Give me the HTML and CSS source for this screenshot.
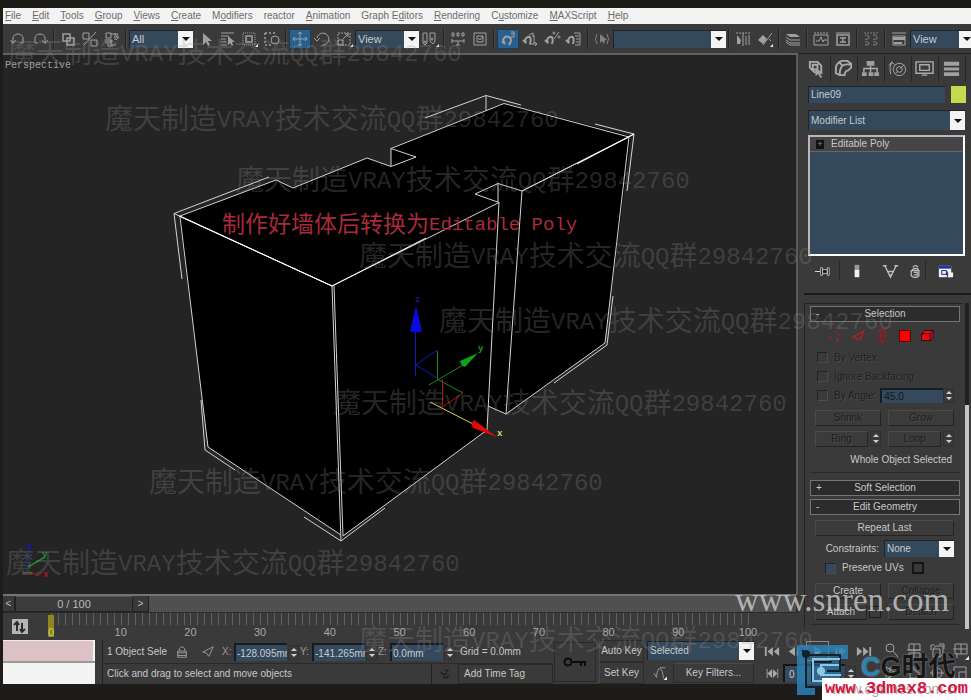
FILE: index.html
```
<!DOCTYPE html>
<html lang="en">
<head>
<meta charset="utf-8">
<title>Perspective</title>
<link rel="stylesheet" href="styles.css">
</head>
<body>
<nav class="menu">
  <button><u>F</u>ile</button><button><u>E</u>dit</button><button><u>T</u>ools</button><button><u>G</u>roup</button><button><u>V</u>iews</button><button><u>C</u>reate</button><button>M<u>o</u>difiers</button><button>reactor</button><button><u>A</u>nimation</button><button>Graph E<u>d</u>itors</button><button><u>R</u>endering</button><button>C<u>u</u>stomize</button><button><u>M</u>AXScript</button><button><u>H</u>elp</button>
</nav>

<div class="toolbar">
  <button class="tool" aria-label="Undo"><svg viewBox="0 0 20 20"><path d="M5 14V9a5 4 0 0 1 10 0v5h-3M2.500 11L5 14.500 8 11"/></svg></button>
  <button class="tool" aria-label="Redo"><svg viewBox="0 0 20 20"><path d="M15 14V9a5 4 0 0 0-10 0v5h3M12 11l3 3.500 3-3.500"/></svg></button>
  <span class="sep"></span>
  <button class="tool" aria-label="Link"><svg viewBox="0 0 20 20"><path stroke-width="1.500" d="M5 5h7v7H5zM9 9h7v7H9z"/></svg></button>
  <button class="tool" aria-label="Unlink"><svg viewBox="0 0 20 20"><path d="M3 4h6v6H3zM11 11h6v6h-6zM16 3L4 16"/></svg></button>
  <button class="tool" aria-label="Bind"><svg viewBox="0 0 20 20"><path d="M4 4h5v5H4zM9 5h7l-2 3h3l-3 3M3 11h7v2H3M9 11v5h5M6 14v3h5M13 4v7"/></svg></button>
  <span class="sep"></span>
  <span class="combo c64"><select aria-label="Selection filter"><option>All</option></select><i></i></span>
  <span class="space"></span>
  <button class="tool" aria-label="Select"><svg viewBox="0 0 20 20"><path class="f" d="M7 4v12l3-3 2 4 2-1-2-4h4z"/></svg></button>
  <button class="tool" aria-label="Select by name"><svg viewBox="0 0 20 20"><path d="M3 4h13M3 7h8M3 10h5M3 13h5M3 16h6"/><path class="f" d="M10 7v9l2-2 2 3 1-1-1-3h3z"/></svg></button>
  <button class="tool" aria-label="Region"><svg viewBox="0 0 20 20"><path stroke-dasharray="1 1" d="M3 4h12v12H3z"/><path stroke-width="1.500" d="M6 7h6v6H6z"/><path class="w" d="M18 15v3h-3z"/></svg></button>
  <button class="tool" aria-label="Crossing"><svg viewBox="0 0 20 20"><path stroke-dasharray="2 2" stroke-width="1.500" d="M3 4h10M3 4v12h8"/><circle cx="13" cy="11" r="4"/></svg></button>
  <span class="sep"></span>
  <button class="tool on" aria-label="Move"><svg viewBox="0 0 20 20"><path d="M10 3v14M3 10h14M8 5l2-2 2 2M8 15l2 2 2-2M5 8l-2 2 2 2M15 8l2 2-2 2"/></svg></button>
  <button class="tool" aria-label="Rotate"><svg viewBox="0 0 20 20"><path d="M5 9a6 6 0 1 1 5 7M2 9l3 3 3-3"/></svg></button>
  <button class="tool" aria-label="Scale"><svg viewBox="0 0 20 20"><path stroke-dasharray="2 1" d="M4 4h12v12H4z"/><path d="M4 11h5v5H4zM9 10l5-5M11 5h3v3"/><path class="w" d="M19 15v3h-3z"/></svg></button>
  <span class="combo c64"><select aria-label="Coordinate system"><option>View</option></select><i></i></span>
  <button class="tool" aria-label="Pivot"><svg viewBox="0 0 20 20"><path d="M3 4h4v10l-2 2-2-2zM10 4h5v8l-2 3-3-3z"/><circle cx="5" cy="13" r="1"/><circle cx="12" cy="10" r="1"/><path class="w" d="M19 15v3h-3z"/></svg></button>
  <span class="sep"></span>
  <button class="tool" aria-label="Manipulate"><svg viewBox="0 0 20 20"><path d="M4 4h2v3H4zM9 4h2v3H9zM14 4h2v3h-2zM4 12h12M4 10v4M16 10v4M10 12v4M8 16h4"/></svg></button>
  <button class="tool" aria-label="Keyboard override"><svg viewBox="0 0 20 20"><path d="M4 4h12v12H4zM7 7h6v6H7zM8 9l2 2 3-4"/></svg></button>
  <span class="sep"></span>
  <button class="tool on" aria-label="Snap"><svg viewBox="0 0 20 20"><path class="b" d="M4 12l3 3M7 15l-2-4q2-5 6-3t0 8M11 16l2-4"/><path d="M13 3h3v5h-3M13 5h3"/></svg></button>
  <button class="tool" aria-label="Angle snap"><svg viewBox="0 0 20 20"><path class="b" d="M3 11l3 3q-2-5 2-6t2 7"/><path d="M9 6l4-2v4M9 15h8M14 6v9M15 13l2 2-2 2"/></svg></button>
  <button class="tool" aria-label="Percent snap"><svg viewBox="0 0 20 20"><path class="b" d="M3 11l3 3q-2-5 2-6t2 7"/><circle cx="12" cy="4" r="1"/><circle cx="17" cy="8" r="1"/><path d="M17 3l-5 7"/></svg></button>
  <button class="tool" aria-label="Spinner snap"><svg viewBox="0 0 20 20"><path class="b" d="M2 11l3 3q-2-5 2-6t2 7"/><path d="M10 4h6v12h-5M11 7h4M12 10h3M12 13h3"/></svg></button>
  <span class="sep"></span>
  <button class="tool dim" aria-label="Named sets"><svg viewBox="0 0 20 20"><path d="M5 5q-3 5 0 10M15 5q3 5 0 10"/><path class="f" d="M8 5v9l2-2 2 3 1-4h2z"/></svg></button>
  <span class="combo c113"><select aria-label="Selection set"><option></option></select><i></i></span>
  <span class="sep"></span>
  <button class="tool" aria-label="Mirror"><svg viewBox="0 0 20 20"><path stroke-dasharray="2 1" d="M3 4h14"/><path class="f" d="M4 6l4 5-1 4H4z"/><path d="M10 4v13M16 6v10M13 7v9"/></svg></button>
  <button class="tool" aria-label="Align"><svg viewBox="0 0 20 20"><path class="f" d="M3 11l5-5 4 4-4 5z"/><path d="M17 4L8 16M14 10l2 2"/><path class="w" d="M18 15v3h-3z"/></svg></button>
  <span class="sep"></span>
  <button class="tool" aria-label="Layers"><svg viewBox="0 0 20 20"><path class="f" d="M3 5h10l4 3H7z"/><path d="M3 8l4 3h10M3 11l4 3h10M3 13l4 3h10"/></svg></button>
  <span class="sep"></span>
  <button class="tool" aria-label="Curve editor"><svg viewBox="0 0 20 20"><path stroke-dasharray="2 1" d="M3 4h14"/><path d="M3 6h14v10H3zM5 12h3l2-4 2 5 1-2h3"/></svg></button>
  <button class="tool" aria-label="Schematic view"><svg viewBox="0 0 20 20"><path d="M3 4h14" /><path stroke-width="1.500" d="M4 6h12v10H4zM7 9h6M7 13h6M10 9v4"/></svg></button>
  <span class="sep"></span>
  <button class="tool dim" aria-label="Materials"><svg viewBox="0 0 20 20"><path stroke-dasharray="2 1" d="M3 4h14"/><path d="M4 6q3-1 4 2t-4 2M12 6q3-1 4 2t-4 2M4 13q3-1 4 1t-4 2M12 13q3-1 4 1t-4 2"/></svg></button>
  <span class="sep"></span>
  <button class="tool" aria-label="Render"><svg viewBox="0 0 20 20"><path d="M3 4h14M4 7h12v9H4z"/><path class="f" d="M4 8h12v3H4zM5 13h8v2H5z"/></svg></button>
  <span class="combo c64"><select aria-label="Render view"><option>View</option></select><i></i></span>
</div>

<main class="main">
  <section class="stage">
    <div class="viewport">
      <svg class="scene" viewBox="3 55 793 539">
        <text x="5" y="68" class="vname">Perspective</text>
        <path fill="#000" d="M179 216L276 180 293 188 367 158 391 166V148L504 103 631 136 605 343 506 414 488 406 487 430 342 536 208 447z"/>
        <g fill="none" stroke="#d4d4d4" stroke-width="1">
          <path d="M180 216L276 180 293 188 367 158 391 166.500 416 157 391 148.500 504 103.500 629 137 522 191 498 183.500 475 194 499 202.500 332 286z"/>
          <path d="M391 148V166M174 213.500L269 177M174 213.500L182 279M174 213.500L332 286M180 217L208 447M201 400L205 450 235 470M208 447L341 535M304 517L341 541M332 286L341 541M334 286L343 536L487 430M341 541L385 508M499 202L487 430M498 183V202M522 191L506 414M488 406L506 414L605 343L629 137M634 134L522 191M634 134L627 191M613 296L607 345 554 383M634 134L595 124M425 118L486 95.500 521 105M486 95.500V111M629 137L634 134"/>
          <path stroke="#fff" d="M179 216L332 286 426 238M577 164L634 134"/>
        </g>
        <g fill="none">
          <path stroke="#1616c8" d="M415.500 376V331M416 365L437 350M416 365L437 378"/>
          <path fill="#0a0ae0" d="M416 306L410 331Q416 334 422 331z"/>
          <path stroke="#128a1c" d="M437.500 351V379M429 385L463 365M437 379L463 393"/>
          <path fill="#10a01c" d="M478 353L460 361Q461 366 465 367z"/>
          <path stroke="#b01414" d="M442.500 379V407L463 393"/>
          <path stroke="#d8d060" d="M430 402L473 424"/>
          <path fill="#e00808" d="M497 437L474 420Q470 424 473 428z"/>
          <path stroke="#1a1aa0" d="M27.500 570L28.500 545"/><path stroke="#178a20" stroke-width="1.500" d="M28 567L45 557"/><path stroke="#a01818" d="M30 572L38 576 42 573"/><path stroke="#777044" d="M23 573H32"/>
        </g>
        <g class="axis"><text x="415" y="302" fill="#15159a">z</text><text x="478" y="351" fill="#1c9c28">y</text><text x="497" y="436" fill="#e0d860">x</text><text x="27" y="549" fill="#1a1aa0">z</text><text x="42" y="557" fill="#1c8c28">y</text><text x="43" y="577" fill="#b01818">x</text></g>
      </svg>
    </div>
    <div class="slider"><button aria-label="Previous frame">&lt;</button><button class="handle">0 / 100</button><button aria-label="Next frame">&gt;</button></div>
    <div class="track">
      <button class="curve" aria-label="Open mini curve editor"><svg viewBox="0 0 16 16"><path fill="#b4b4b4" d="M0 0h16v15H0z"/><path fill="none" stroke="#2c2c2c" stroke-width="2" d="M5 12V4M10 4v8M2 6l3-3 2 3M8 10l2 3 3-3"/></svg></button>
      <div class="ruler">
        <div class="cell"><b class="now">0</b></div><div class="cell"><b>10</b></div><div class="cell"><b>20</b></div><div class="cell"><b>30</b></div><div class="cell"><b>40</b></div><div class="cell"><b>50</b></div><div class="cell"><b>60</b></div><div class="cell"><b>70</b></div><div class="cell"><b>80</b></div><div class="cell"><b>90</b></div><div class="cell last"><b>100</b></div>
      </div>
    </div>
  </section>

  <aside class="panel">
    <div class="tabs">
      <button aria-label="Create"><svg viewBox="0 0 20 20"><path d="M3 3h8l4 4v7H8L3 9zM6 6h5v5H6z"/><path class="f" d="M9 9l8 6-3 1 2 3-2 1-2-4-3 2z"/></svg></button>
      <button aria-label="Modify"><svg viewBox="0 0 20 20"><path d="M2 15V9q1-6 7-7h5l4 3v4l-3 3q-3 0-4 5H6zM9 7q4-2 8-1M9 7q-3 3-3 9M9 7L6 4"/></svg></button>
      <button aria-label="Hierarchy"><svg viewBox="0 0 20 20"><path class="f" d="M6 2h8v5H6zM1 14h5v4H1zM8 14h5v4H8zM14 14h5v4h-5z"/><path stroke-width="1.500" d="M10 7v7M3 14v-4h14v4"/></svg></button>
      <button aria-label="Motion"><svg viewBox="0 0 20 20" class="thin"><circle cx="12" cy="11" r="6.500"/><circle cx="12" cy="11" r="3"/><path d="M3 16q-2-8 1-12M1 7l3-4 3 3M13 10l4-4M8 15l2-2"/></svg></button>
      <button aria-label="Display"><svg viewBox="0 0 20 20"><path d="M1 3h18v12H1zM5 6h10v6H5zM7 17h6" stroke-width="1.500"/></svg></button>
      <button aria-label="Utilities"><svg viewBox="0 0 20 20"><path class="f" d="M2 3h16v4H2zM2 9h16v3H2zM2 14h16v4H2z"/></svg></button>
    </div>
    <div class="name"><input aria-label="Object name" value="Line09"><button class="swatch" aria-label="Object colour"></button></div>
    <span class="combo mod"><select aria-label="Modifier list"><option>Modifier List</option></select><i></i></span>
    <div class="stack"><button><span class="plus">+</span>Editable Poly</button></div>
    <div class="stacktools">
      <button aria-label="Pin stack"><svg viewBox="0 0 20 20"><path d="M1 10h6" stroke="#ddd"/><path class="k" d="M7 6h2v8H7zM9 8h5v4H9zM14 6h2v8h-2z" stroke="#bbb"/></svg></button>
      <button aria-label="Show end result"><svg viewBox="0 0 20 20"><path fill="#999" stroke="none" d="M8 3h5v5H8z"/><path class="w" d="M8 8h5v8H8z"/></svg></button>
      <button aria-label="Make unique"><svg viewBox="0 0 20 20"><path d="M4 4l6 12 6-12M2 4h4M14 4h4M7 10h6M10 16v-3" stroke-width="1.500"/></svg></button>
      <button aria-label="Remove modifier"><svg viewBox="0 0 20 20"><path d="M5 9h9v6q-4 4-9 0zM6 8q4-3 8 0M7 5q3-4 6 0M8 11h4v3H8" stroke-width="1.500"/></svg></button>
      <button aria-label="Configure sets"><svg viewBox="0 0 20 20"><path fill="#eee" stroke="none" d="M3 4h13v12H3z"/><path fill="#2430b0" stroke="none" d="M3 4h13v3H3z"/><path stroke="#1c2478" d="M6 9h5v4H6zM12 10v6M15 13h-5"/><path class="w" d="M13 11h5v5h-5z"/></svg></button>
    </div>
    <div class="rollouts">
      <div class="scroll">
        <div class="rollout">
          <button class="head"><span>-</span>Selection</button>
          <div class="sub">
            <button aria-label="Vertex"><svg viewBox="0 0 20 20"><path fill="#b01c1c" d="M3 11h2v2H3zM9 4h2v2H9zM11 14h3v3h-3zM13 8h2v2h-2z"/></svg></button>
            <button aria-label="Edge"><svg viewBox="0 0 20 20"><path fill="none" stroke="#b82020" stroke-width="1.500" d="M3 12l13-7-4 10z"/></svg></button>
            <button aria-label="Border"><svg viewBox="0 0 20 20"><path fill="none" stroke="#a81818" stroke-width="1.500" d="M7 5l4-3 4 4v8l-4 4-4-3 3-3V7z"/></svg></button>
            <button aria-label="Polygon"><svg viewBox="0 0 20 20"><path fill="#f00" stroke="#400" d="M4 4h13v13H4z"/></svg></button>
            <button aria-label="Element"><svg viewBox="0 0 20 20"><path fill="#e80c0c" stroke="#300" d="M3 8l4-4h10v8l-4 4H3zM3 8h10v8M13 8l4-4"/><path fill="#602060" d="M14 8l3-3v6l-3 3z"/></svg></button>
          </div>
          <label class="check off"><input type="checkbox" disabled>By Vertex</label>
          <label class="check off"><input type="checkbox" disabled>Ignore Backfacing</label>
          <div class="anglerow"><label class="check off"><input type="checkbox" disabled>By Angle:</label><input class="angle" aria-label="Angle" value="45.0" disabled><span class="spin"></span></div>
          <div class="pair"><button disabled>Shrink</button><button disabled>Grow</button></div>
          <div class="pair"><div class="with"><button disabled>Ring</button><span class="spin"></span></div><div class="with"><button disabled>Loop</button><span class="spin"></span></div></div>
          <p class="whole">Whole Object Selected</p>
        </div>
        <div class="rollout closed"><button class="head"><span>+</span>Soft Selection</button></div>
        <div class="rollout">
          <button class="head"><span>-</span>Edit Geometry</button>
          <button class="wide">Repeat Last</button>
          <div class="cons"><label for="cons">Constraints:</label><span class="combo"><select id="cons"><option>None</option></select><i></i></span></div>
          <div class="uvs"><label class="check blue"><input type="checkbox">Preserve UVs</label><button class="box" aria-label="Preserve UV settings"></button></div>
          <div class="pair"><button>Create</button><button disabled>Collapse</button></div>
          <div class="pair"><div class="with"><button>Attach</button><button class="box" aria-label="Attach list"></button></div><button disabled>Detach</button></div>
        </div>
      </div>
      <div class="bar"></div>
    </div>
  </aside>
</main>

<footer class="status">
  <div class="listener"><div></div><div></div></div>
  <div class="info">
    <div class="coords">
      <span class="sel">1 Object Sele</span>
      <button class="ic" aria-label="Lock"><svg viewBox="0 0 16 16"><path d="M3 7h10v7H3zM5 7V4q3-4 6 0v3M3 9h10M3 12h10"/></svg></button>
      <button class="ic" aria-label="Absolute mode"><svg viewBox="0 0 16 16"><path d="M2 8l12-6-5 11-3-4z"/></svg></button>
      <label>X:<input value="-128.095mm"></label><span class="spin"></span>
      <label>Y:<input value="-141.265mm"></label><span class="spin"></span>
      <label>Z:<input value="0.0mm"></label><span class="spin"></span>
      <span class="grid">Grid = 0.0mm</span>
    </div>
    <div class="prompt"><span class="msg">Click and drag to select and move objects</span><button class="ic dark" aria-label="Degradation"><svg viewBox="0 0 16 16"><path d="M3 6l4 3 3-2M8 3l4 2M6 11q4 3 6-1" stroke-width="2"/></svg></button><button class="tag">Add Time Tag</button></div>
  </div>
  <button class="key" aria-label="Set keys"><svg viewBox="0 0 24 12"><path fill="none" stroke="#0c0c0c" stroke-width="2" d="M9 6h14M18 6v4M22 6v4"/><circle cx="5" cy="6" r="3.500" fill="none" stroke="#0c0c0c" stroke-width="2"/></svg></button>
  <div class="keys"><button>Auto Key</button><button>Set Key</button></div>
  <div class="filters">
    <span class="combo"><select aria-label="Key set"><option>Selected</option></select><i></i></span>
    <div><button class="ic" aria-label="Tangents"><svg viewBox="0 0 16 16"><path d="M1 8l3 5Q5 2 8 3t4 11M8 2h6"/><path class="w" d="M16 12v4h-4z"/></svg></button><button class="kf">Key Filters...</button></div>
  </div>
  <div class="play">
    <div><button aria-label="Start"><svg viewBox="0 0 18 12"><path d="M1 1h2v10H1zM10 1v10L4 6zM17 1v10l-6-5z"/></svg></button><button aria-label="Back"><svg viewBox="0 0 18 12"><path d="M9 1v10L2 6zM11 1h2v10h-2z"/></svg></button><button class="big" aria-label="Play"><svg viewBox="0 0 18 12"><path d="M5 0l9 6-9 6z"/></svg></button><button aria-label="Forward"><svg viewBox="0 0 18 12"><path d="M3 1h2v10H3zM7 1l8 5-8 5z"/></svg></button><button aria-label="End"><svg viewBox="0 0 18 12"><path d="M1 1l6 5-6 5zM8 1l6 5-6 5zM15 1h2v10h-2z"/></svg></button></div>
    <div><button aria-label="Key mode"><svg viewBox="0 0 18 12"><path d="M3 1h1v10H3zM9 1v10L4 6zM10 1l5 5-5 5zM15 1h1v10h-1z"/></svg></button><input aria-label="Frame" value="0"><span class="spin"></span></div>
  </div>
  <div class="nav">
    <button aria-label="Zoom"><svg viewBox="0 0 18 18"><circle cx="8" cy="6" r="4"/><path d="M11 9l5 6"/></svg></button>
    <button aria-label="Zoom all"><svg viewBox="0 0 18 18"><path d="M4 2h11v6H4zM9 2v14M2 8h14M4 11h11v5H4z"/></svg></button>
    <button aria-label="Extents"><svg viewBox="0 0 18 18"><path d="M3 8V3h4M11 2h5v5M5 7h7v8H5zM5 7l3-3h7v8l-3 3"/></svg></button>
    <button aria-label="Extents all"><svg viewBox="0 0 18 18"><path d="M4 2h12v10H4zM10 2v10M2 7h14M6 11v5"/><path class="w" d="M18 14v4h-4z"/></svg></button>
    <button aria-label="Field of view"><svg viewBox="0 0 18 18"><path d="M4 3l10 6-10 6zM8 3v12"/></svg></button>
    <button aria-label="Pan"><svg viewBox="0 0 18 18"><path d="M5 14V6h2V3h2v3h2v2h3v6z"/></svg></button>
    <button aria-label="Orbit"><svg viewBox="0 0 18 18"><circle cx="9" cy="9" r="5"/><path d="M2 9h14M9 2v14"/></svg></button>
    <button aria-label="Maximize"><svg viewBox="0 0 18 18"><path d="M3 3h12v12H3zM8 8h7M8 8v7"/></svg></button>
  </div>
</footer>

<div class="mark m1">魔天制造<span>VRAY</span>技术交流<span>QQ</span>群<span>29842760</span></div>
<div class="mark m2">魔天制造<span>VRAY</span>技术交流<span>QQ</span>群<span>29842760</span></div>
<div class="mark m3">魔天制造<span>VRAY</span>技术交流<span>QQ</span>群<span>29842760</span></div>
<div class="mark m4">魔天制造<span>VRAY</span>技术交流<span>QQ</span>群<span>29842760</span></div>
<div class="mark m5">魔天制造<span>VRAY</span>技术交流<span>QQ</span>群<span>29842760</span></div>
<div class="mark m6">魔天制造<span>VRAY</span>技术交流<span>QQ</span>群<span>29842760</span></div>
<div class="mark m7">魔天制造<span>VRAY</span>技术交流<span>QQ</span>群<span>29842760</span></div>
<div class="mark m8">魔天制造<span>VRAY</span>技术交流<span>QQ</span>群<span>29842760</span></div>
<div class="mark m9">魔天制造<span>VRAY</span>技术交流<span>QQ</span>群<span>29842760</span></div>
<div class="note">制作好墙体后转换为<span>Editable Poly</span></div>
<div class="site">www.snren.com</div>
<svg class="logo" viewBox="0 0 52 50"><path fill="#2b82b8" fill-opacity=".85" d="M0 0h51v14h-8V7H8v36h10v7H0z"/><path fill="#2b82b8" fill-opacity=".55" d="M8 7h35v36H8z"/><path fill="none" stroke="#14212b" stroke-width="2" d="M5 5l4 5v32h24M9 10h34v16H30M15 17h20M15 17v19h20"/><circle cx="9" cy="9" r="4" fill="#14212b"/><path fill="none" stroke="#8fc6e6" stroke-width="2" d="M43 14H16v22h26M42 20H24v10h20M20 26h8"/><circle cx="24" cy="26" r="4" fill="#8fc6e6"/></svg>
<div class="cg"><b>C</b>G时代</div>
<div class="strip"><span class="ghost">www.cgtimes.com.cn</span><span class="url">www.3dmax8.com</span></div>
</body>
</html>
```
FILE: styles.css
```
* { box-sizing: border-box; }
body {
  margin: 0; height: 100vh; padding: 8px 0 16px 3px; overflow: hidden; position: relative;
  display: flex; flex-direction: column;
  background: #1e1c18; color: #c8c8c8; font: 10px/14px "Liberation Sans", Roboto, sans-serif;
}
button, input, select { font: inherit; color: inherit; border: 0; padding: 0; margin: 0; border-radius: 0; background: none; min-width: 0; }
select, input { appearance: none; outline: 0; }
button { display: flex; align-items: center; justify-content: center; }
svg { display: block; }

.menu { display: flex; height: 16px; flex: none; background: #f3f3f3; color: #6c6c6c; padding: 0 0 2px 2px; gap: 11px; align-items: center; }
.menu button { display: block; white-space: nowrap; line-height: 13px; }

.toolbar { display: flex; align-items: center; flex: none; height: 29px; background: #3a3a3a; padding-left: 4px; overflow: hidden; }
.toolbar > * { flex: none; }
.tool { width: 22px; height: 20px; }
.tool svg { width: 20px; height: 20px; }
.tool.on { background: #28608f; border: 1px solid #1c3a54; }
.tool.dim { opacity: .7; }
.tool svg, .tabs svg, .stacktools svg, .ic svg, .nav svg { fill: none; stroke: #a0a0a0; stroke-width: 1; }
svg .f { fill: #a0a0a0; stroke: none; }
svg .w { fill: #f0f0f0; stroke: none; }
svg .k { fill: #161616; }
svg .b { stroke-width: 2; }
.sep { width: 6px; height: 20px; background: linear-gradient(90deg, transparent 2px, #222 2px 3px, #484848 3px 4px, transparent 4px); }
.space { width: 2px; }

.combo { display: grid; grid-template-columns: 1fr 15px; height: 18px; background: #34495b; border: 1px solid #1d242b; border-right: 0; border-bottom: 0; color: #c4ccd2; }
.combo select { grid-area: 1 / 1 / 2 / 3; padding-left: 2px; padding-right: 16px; width: 100%; height: 100%; }
.combo i { grid-area: 1 / 2; background: #f4f4f4; display: grid; place-items: center; pointer-events: none; }
.combo i::before { content: ""; border: 4px solid transparent; border-top-color: #111; border-bottom: 0; }
.c64 { width: 64px; }
.c113 { width: 113px; }
.toolbar .combo { font-size: 11px; }

.main { flex: 1; min-height: 0; display: flex; background: #3a3a3a; }
.stage { flex: 1; min-width: 0; display: flex; flex-direction: column; }
.viewport { flex: 1; min-height: 0; background: #242424; border-top: 2px solid #606060; border-right: 2px solid #5a5a5a; }
.scene { width: 100%; height: 100%; }
.vname { font: 10px "Liberation Mono", monospace; fill: #9c9c9c; }
.axis { font: bold 9px "Liberation Mono", monospace; }

.slider { display: flex; height: 18px; flex: none; background: #505050; border-top: 2px solid #747474; border-right: 2px solid #2a2a2a; color: #bbb; }
.slider button { width: 16px; background: #393939; border-right: 1px solid #222; border-bottom: 1px solid #222; }
.slider .handle { width: 118px; background: #3c3c3c; border: 1px solid #222; border-top-color: #555; font-size: 11px; }
.slider button:first-child { width: 12px; }

.track { display: flex; height: 28px; flex: none; padding-right: 49px; border-top: 1px solid #2a2a2a; }
.curve { width: 48px; padding-right: 14px; flex: none; }
.curve svg { width: 16px; height: 16px; }
.ruler { flex: 1; display: flex; }
.cell { flex: 1; min-width: 0; background: repeating-linear-gradient(90deg, #626262 0 1px, transparent 1px 7px) 0 0 / 100% 12px no-repeat; color: #a8a8a8; }
.cell.last { flex: 0 0 1px; }
.cell b { display: block; width: 30px; margin: 13px 0 0 -15px; text-align: center; font-weight: 400; line-height: 12px; font-size: 11px; }
.cell .now { width: 6px; margin: 2px 0 0 -3px; height: 22px; background: #8e8620; color: #d8d060; padding-top: 11px; }

.panel { width: 173px; flex: none; padding: 2px 0 0 6px; display: flex; flex-direction: column; border-top: 1px solid #222; }
.tabs { display: flex; height: 26px; }
.tabs button { width: 27px; flex: none; border-right: 1px solid #272727; padding-right: 2px; padding-bottom: 2px; }
.tabs svg { width: 19px; height: 19px; stroke: #aaa; stroke-width: 2; }
.tabs svg.thin { stroke-width: 1; }
.name { display: flex; gap: 6px; margin: 4px 5px 0 4px; height: 17px; }
.name input { flex: 1; background: #34495b; border: 1px solid #1c242c; border-width: 1px 0 0 1px; padding-left: 2px; color: #c4ccd2; }
.swatch { width: 15px; background: #c4da50; }
.combo.mod { margin: 7px 6px 0 4px; height: 20px; }
.stack { margin: 5px 6px 0 4px; height: 121px; background: #34495b; border: 2px solid #fff; border-top-color: #b8b8b8; border-left-color: #b8b8b8; }
.stack button { width: 100%; height: 15px; justify-content: start; background: #454547; border-bottom: 1px solid #666; }
.plus { width: 8px; height: 9px; background: #111; color: #888; margin: 0 7px 0 6px; font-size: 9px; line-height: 9px; }
.stacktools { display: grid; grid-template-columns: 30px 36px 32px 18px 1fr; height: 30px; margin: 0 5px 0 4px; }
.stacktools button { border-left: 1px solid transparent; }
.stacktools button:nth-child(2), .stacktools button:last-child { background: linear-gradient(#292929, #292929) 0 50% / 1px 20px no-repeat; }
.stacktools svg { width: 19px; height: 19px; stroke: #bbb; }
.rollouts { margin-top: 7px; padding-top: 8px; border-top: 2px solid #1a1a1a; display: flex; height: 336px; }
.scroll { flex: 1; min-width: 0; border-left: 1px solid #242424; border-top: 1px solid #242424; padding: 2px 2px 0 5px; }
.bar { width: 4px; margin: 0 2px 0 3px; background: linear-gradient(#202020 102px, #c4c4c4 102px); }
.rollout { padding: 0 1px 4px 0; border-bottom: 1px solid #2a2a2a; margin-bottom: 7px; }
.rollout.closed { padding: 0 1px 0 0; margin-bottom: 3px; border: 0; }
.rollout > *, .rollout .pair { margin-left: 5px; margin-right: 5px; }
.rollout .head { width: calc(100% + 1px); height: 16px; margin: 0; position: relative; background: #2c2c2c; border: 1px solid #747474; }
.head span { position: absolute; left: 5px; }
.sub { display: flex; height: 26px; padding-left: 10px; gap: 3px; align-items: center; }
.sub button { width: 20px; }
.sub svg { width: 17px; height: 17px; }
.check { display: flex; align-items: center; height: 19px; gap: 6px; white-space: nowrap; padding-left: 2px; }
.check input { width: 11px; height: 11px; border: 1px solid #222; border-right-color: #4c4c4c; border-bottom-color: #4c4c4c; flex: none; }
.check.off, .rollout button:disabled { color: #202020; text-shadow: 1px 1px 0 #4a4a4a; }
.check.blue input { background: #34495b; }
.anglerow { display: flex; align-items: center; }
.angle { flex: 1; height: 15px; margin-left: 4px; background: #34495b; border: 1px solid #151c22; border-width: 2px 0 0 2px; padding-left: 2px; color: #10161c; }
.spin { width: 11px; height: 15px; flex: none; display: flex; flex-direction: column; align-items: center; justify-content: center; gap: 3px; border: 1px solid #303030; }
.spin::before { content: ""; border: 3px solid transparent; border-bottom-color: #d0d0d0; border-top: 0; }
.spin::after { content: ""; border: 3px solid transparent; border-top-color: #d0d0d0; border-bottom: 0; }
.pair { display: grid; grid-template-columns: 1fr 1fr; gap: 7px; margin-top: 5px; height: 16px; }
.pair button, .wide { border: 1px solid #4a4a4a; border-right-color: #242424; border-bottom-color: #242424; background: #3b3b3b; }
.with { display: flex; gap: 2px; }
.with button:first-child { flex: 1; }
.whole { margin: 5px 8px 0 0; text-align: right; height: 16px; line-height: 16px; white-space: nowrap; }
.rollout .whole { margin-right: 7px; margin-bottom: 0; }
.wide { height: 16px; width: calc(100% - 10px); margin-top: 5px; }
.cons { display: flex; justify-content: end; align-items: center; gap: 5px; margin-top: 4px; height: 17px; }
.cons .combo { width: 70px; height: 17px; }
.uvs { display: flex; align-items: center; justify-content: space-between; padding: 0 30px 0 8px; height: 22px; }
.uvs + .pair { margin-top: 4px; }
.box { width: 12px; height: 12px; border: 2px solid #141414; align-self: center; }
.with .box { border: 1px solid #1a1a1a; }

.status { flex: none; display: flex; height: 44px; background: #3a3a3a; overflow: hidden; }
.listener { width: 92px; flex: none; display: grid; grid-template-rows: 21px 1fr; gap: 2px; background: #999; margin-right: 7px; }
.listener div { background: #f4f4f4; }
.listener div:first-child { background: #dcc2c4; border-right: 2px solid #f4f4f4; border-top: 1px solid #eee; }
.info { width: 451px; flex: none; border-left: 1px solid #222; display: flex; flex-direction: column; padding-top: 2px; }
.coords { display: flex; height: 20px; align-items: center; }
.coords > * { flex: none; }
.sel { width: 66px; overflow: hidden; white-space: nowrap; padding-left: 4px; }
.ic { width: 26px; height: 20px; flex: none; }
.ic svg { width: 14px; height: 14px; }
.ic.dark svg { stroke: #222; }
.coords label { display: flex; align-items: center; justify-content: space-between; width: 66px; color: #999; padding-left: 1px; }
.coords label input { width: 53px; height: 18px; background: #34495b; border: 1px solid #141b22; border-width: 2px 0 0 2px; padding-left: 1px; color: #c4ccd2; }
.coords .spin { margin: 0 0 0 1px; }
.grid { padding-left: 5px; white-space: nowrap; }
.prompt { display: flex; flex: 1; border-top: 1px solid #2a2a2a; margin-top: 1px; }
.msg { flex: 1; line-height: 20px; padding-left: 4px; border-right: 1px solid #222; }
.tag { width: 95px; justify-content: start; padding-left: 5px; border: 1px solid #2a2a2a; }
.key { width: 42px; margin: 2px 3px 2px 1px; flex: none; border: 1px solid #2a2a2a; }
.key svg { width: 24px; height: 12px; }
.keys { width: 45px; flex: none; display: grid; grid-template-rows: 1fr 1fr; }
.keys button { border: 1px solid #2c2c2c; border-left-color: #4a4a4a; white-space: nowrap; }
.filters { width: 107px; flex: none; margin-left: 3px; padding-top: 1px; }
.filters > div { display: flex; height: 20px; margin-top: 3px; }
.filters .combo { height: 19px; }
.kf { flex: 1; border: 1px solid #2c2c2c; border-top-color: #4a4a4a; white-space: nowrap; }
.play { width: 117px; flex: none; margin-left: 6px; }
.play > div { display: flex; align-items: center; height: 22px; }
.play button { width: 23px; height: 20px; flex: none; }
.play svg { width: 16px; height: 11px; fill: #a8a8a8; }
.play input { width: 62px; height: 18px; background: #34495b; border: 2px solid #151515; border-width: 2px 0 0 2px; padding-left: 4px; }
.big { border: 1px solid #8a8a8a; }
.nav { flex: 1; display: grid; grid-template-columns: repeat(4, 23px); padding-left: 2px; }
.nav svg { width: 18px; height: 18px; }

.mark, .note { position: absolute; white-space: nowrap; pointer-events: none; font: 28px/30px "Noto Sans CJK SC", sans-serif; color: rgba(150, 150, 150, .25); }
.mark span, .note span { font: 24px/24px "Liberation Mono", monospace; vertical-align: 2px; }
.m1 { left: 8px; top: 36px; } .m2 { left: 105px; top: 102px; } .m3 { left: 236px; top: 163px; }
.m4 { left: 359px; top: 239px; } .m5 { left: 439px; top: 304px; } .m6 { left: 333px; top: 386px; }
.m7 { left: 149px; top: 465px; } .m8 { left: 6px; top: 546px; } .m9 { left: 359px; top: 623px; }
.note { left: 222px; top: 207px; font-size: 23px; color: #a82a3c; }
.note span { font-size: 19px; }
.site { position: absolute; left: 735px; top: 582px; font: 33px/36px "Liberation Serif", serif; color: rgba(205, 205, 205, .8); pointer-events: none; }
.logo { position: absolute; left: 797px; top: 645px; width: 52px; height: 50px; }
.cg { position: absolute; left: 861px; top: 651px; font: bold 27px/32px "Liberation Sans", "Noto Sans CJK SC", sans-serif; color: #151515; white-space: nowrap; text-shadow: 0 0 2px #999; }
.cg b { color: #2b82b8; }
.strip { position: absolute; right: 0; bottom: 0; width: 149px; height: 22px; background: #fff; display: grid; align-items: center; justify-items: center; overflow: hidden; white-space: nowrap; }
.strip span { grid-area: 1 / 1; }
.ghost { font: 14px/16px "Liberation Sans", sans-serif; color: #aaa; }
.url { font: bold 17px/20px "Liberation Mono", monospace; color: #d8143c; }
```
